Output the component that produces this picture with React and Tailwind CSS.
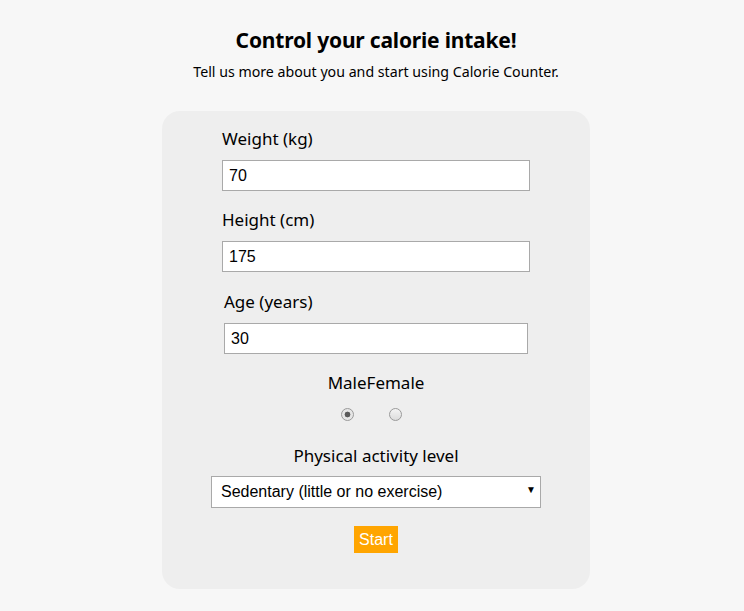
import React from 'react';

const Field = ({ label, value }) => (
  <div className="flex flex-col">
    <label className="text-[17px] leading-[22px] text-black h-[22px]">{label}</label>
    <input
      readOnly
      value={value}
      className="mt-[10px] h-[31px] border border-[#a9a9a9] bg-white px-[6px] text-[16px] text-black outline-none font-['Liberation_Sans',Arial,sans-serif]"
    />
  </div>
);

const Radio = ({ checked }) => (
  <input
    type="radio"
    name="sex"
    defaultChecked={checked}
    className="appearance-none w-[13px] h-[13px] m-0 rounded-full border border-[#9a9a9a] bg-[linear-gradient(#f4f4f4,#dcdcdc)] checked:bg-[radial-gradient(circle,#5a5a5a_0,#5a5a5a_2.6px,#e6e6e6_3.2px)]"
  />
);

export default function App() {
  return (
    <div className="min-h-[611px] bg-[#f7f7f7] pl-2 font-['Noto_Sans',sans-serif]">
      <div className="flex flex-col items-center pt-[24px]">
        <h1 className="text-[21px] leading-[32px] font-bold text-black tracking-[-0.2px]">Control your calorie intake!</h1>
        <p className="mt-[6px] text-[14.2px] leading-[20px] text-black">Tell us more about you and start using Calorie Counter.</p>

        <div className="mt-[29px] w-[428px] h-[478px] rounded-[18px] bg-[#eeeeee] flex flex-col items-center pt-[17px]">
          <div className="w-[308px] flex flex-col">
            <Field label="Weight (kg)" value="70" />
            <div className="h-[18px]" />
            <Field label="Height (cm)" value="175" />
            <div className="h-[18px]" />
            <div className="px-[2px] pt-[1px]">
              <Field label="Age (years)" value="30" />
            </div>
          </div>

          <div className="mt-[18px] text-[17px] leading-[22px] text-black">MaleFemale</div>
          <div className="mt-[14px] mr-[10px] flex gap-[35px]">
            <Radio checked />
            <Radio />
          </div>

          <div className="mt-[24px] text-[17px] leading-[22px] text-black">Physical activity level</div>
          <div className="mt-[9px] relative w-[330px] h-[32px] border border-[#a9a9a9] bg-white flex items-center pl-[9px] font-['Liberation_Sans',Arial,sans-serif] text-[16px] text-black">
            Sedentary (little or no exercise)
            <span className="absolute right-[4px] top-[8px] text-[10px] leading-none">▼</span>
          </div>

          <button className="mt-[18px] w-[44px] h-[27px] bg-[#ffa500] text-white text-[16px] font-['Liberation_Sans',Arial,sans-serif]">
            Start
          </button>
        </div>
      </div>
    </div>
  );
}
